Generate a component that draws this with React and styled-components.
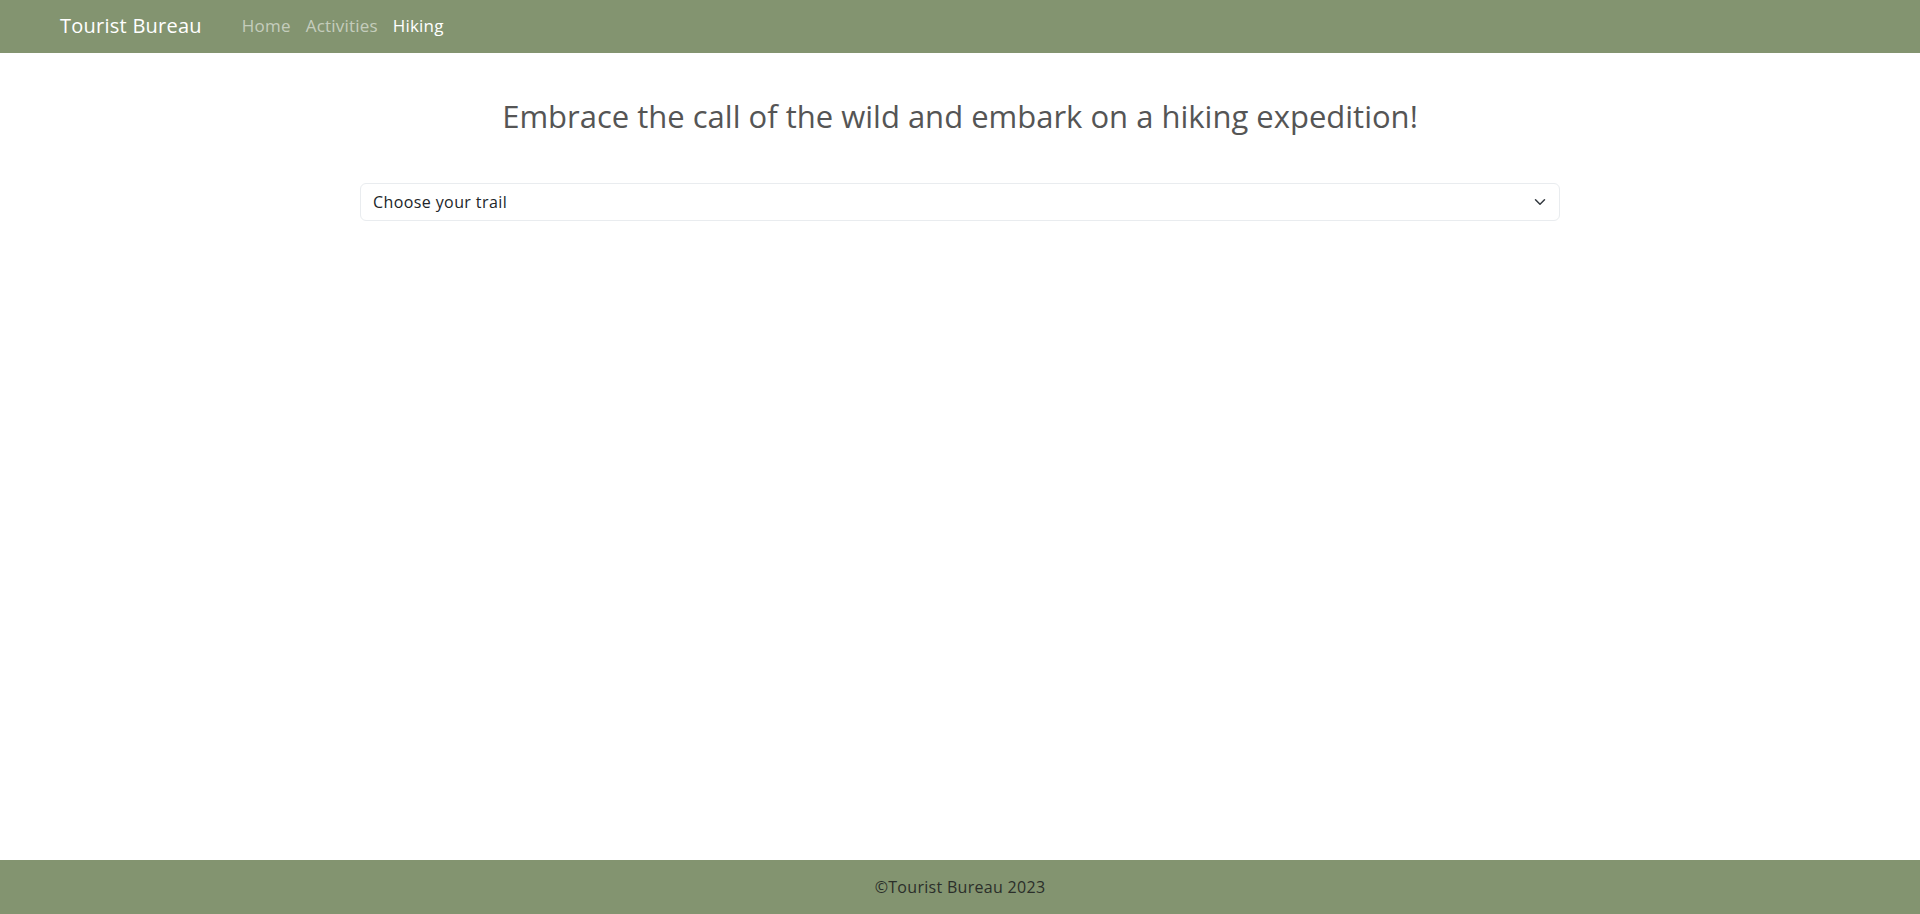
import React from 'react';
import styled, { createGlobalStyle } from 'styled-components';

const GlobalStyle = createGlobalStyle`
  * {
    box-sizing: border-box;
  }

  body {
    margin: 0;
    font-family: 'Open Sans', 'Liberation Sans', sans-serif;
    color: #212529;
    background: #fff;
  }
`;

const Page = styled.div`
  min-height: 100vh;
  display: flex;
  flex-direction: column;
`;

const Navbar = styled.nav`
  height: 53px;
  background-color: #839470;
  display: flex;
  align-items: center;
  padding: 0 60px 3px;
`;

const Brand = styled.a`
  font-size: 20px;
  color: #fff;
  text-decoration: none;
  margin-right: 40px;
  letter-spacing: 0.25px;
`;

const NavLinks = styled.ul`
  display: flex;
  gap: 15px;
  list-style: none;
  margin: 0;
  padding: 0;
`;

const NavLink = styled.a`
  font-size: 17px;
  letter-spacing: 0.2px;
  text-decoration: none;
  color: ${(props) => (props.$active ? '#fff' : 'rgba(255, 255, 255, 0.55)')};
`;

const Main = styled.main`
  flex: 1;
  display: flex;
  flex-direction: column;
  align-items: center;
  padding-top: 43px;
`;

const Heading = styled.h2`
  margin: 0 0 47px;
  font-family: 'Open Sans', 'DejaVu Sans', sans-serif;
  font-weight: 400;
  font-size: 31px;
  line-height: 40px;
  color: #555;
`;

const SelectWrapper = styled.div`
  position: relative;
  width: 1200px;
`;

const Select = styled.select`
  appearance: none;
  width: 100%;
  height: 38px;
  padding: 0 36px 0 12px;
  font-family: 'Open Sans', 'Liberation Sans', sans-serif;
  font-size: 16px;
  letter-spacing: 0.4px;
  color: #212529;
  background: #fff;
  border: 1px solid #e9ecef;
  border-radius: 6px;
  outline: none;
`;

const Chevron = styled.svg`
  position: absolute;
  right: 14px;
  top: 50%;
  transform: translateY(-50%);
  pointer-events: none;
`;

const Footer = styled.footer`
  height: 54px;
  background-color: #839470;
  display: flex;
  align-items: center;
  justify-content: center;
  font-size: 16px;
  letter-spacing: 0.3px;
  color: #2b2f2a;
`;

export default function App() {
  return (
    <Page>
      <GlobalStyle />
      <Navbar>
        <Brand href="#">Tourist Bureau</Brand>
        <NavLinks>
          <li>
            <NavLink href="#">Home</NavLink>
          </li>
          <li>
            <NavLink href="#">Activities</NavLink>
          </li>
          <li>
            <NavLink href="#" $active>
              Hiking
            </NavLink>
          </li>
        </NavLinks>
      </Navbar>
      <Main>
        <Heading>Embrace the call of the wild and embark on a hiking expedition!</Heading>
        <SelectWrapper>
          <Select defaultValue="">
            <option value="">Choose your trail</option>
          </Select>
          <Chevron width="12" height="12" viewBox="0 0 16 16" fill="none">
            <path
              d="M2 5l6 6 6-6"
              stroke="#343a40"
              strokeWidth="2"
              strokeLinecap="round"
              strokeLinejoin="round"
            />
          </Chevron>
        </SelectWrapper>
      </Main>
      <Footer>©Tourist Bureau 2023</Footer>
    </Page>
  );
}
